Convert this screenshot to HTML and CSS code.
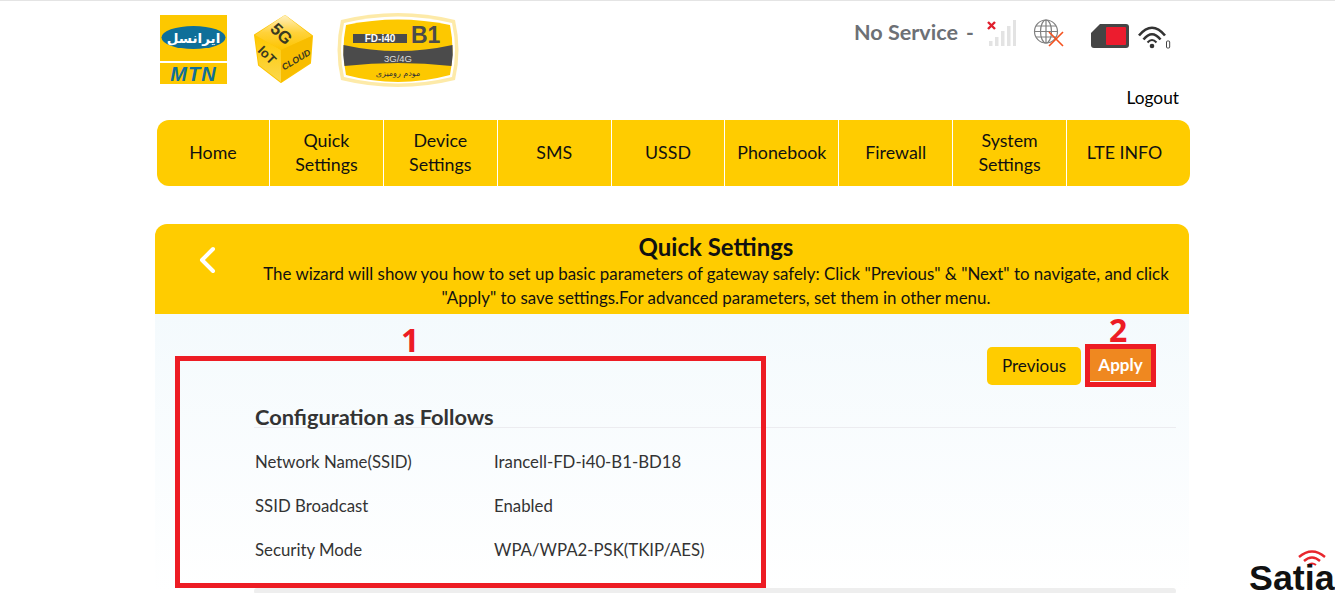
FILE: index.html
```html
<!DOCTYPE html>
<html lang="en">
<head>
<meta charset="utf-8">
<title>Quick Settings</title>
<link rel="stylesheet" href="styles.css">
</head>
<body>
<div class="page">
  <header class="header">
    <div class="logos">
      <svg class="logo-mtn" width="68" height="70" viewBox="0 0 68 70">
        <rect x="0" y="0" width="67" height="46" fill="#fdc800"/>
        <rect x="0" y="48" width="67" height="21" fill="#fdc800"/>
        <ellipse cx="33.500" cy="22.500" rx="32" ry="11.500" fill="#0f6f99"/>
        <text x="33.500" y="28" text-anchor="middle" class="t-fa" font-size="13.500" fill="#fff" font-weight="700">ایرانسل</text>
        <text x="33.500" y="66" text-anchor="middle" class="t-mtn">MTN</text>
      </svg>
      <svg class="logo-cube" width="62" height="72" viewBox="0 0 62 72">
        <defs>
          <linearGradient id="cubeTop" x1="0" y1="0" x2="0" y2="1">
            <stop offset="0" stop-color="#fff1c4"/>
            <stop offset="0.5" stop-color="#ffd23a"/>
            <stop offset="1" stop-color="#fdc400"/>
          </linearGradient>
          <linearGradient id="cubeLeft" x1="0" y1="0" x2="0" y2="1">
            <stop offset="0" stop-color="#ffc800"/>
            <stop offset="1" stop-color="#fbd84e"/>
          </linearGradient>
        </defs>
        <path d="M32 3 L59 23 L57 50 L28 69 L6 52 L2 22 Z" fill="#fdc400" stroke="#fdc400" stroke-width="2" stroke-linejoin="round"/>
        <path d="M2 22 L28 37 L28 69 L6 52 Z" fill="url(#cubeLeft)"/>
        <path d="M32 2 L59 23 L28 37 L2 22 Z" fill="url(#cubeTop)"/>
        <path d="M28 37 L28 69 L57 50 L59 23 Z" fill="#f8bd00"/>
        <text x="0" y="0" transform="translate(16.300 16.900) rotate(45)" class="t-cube-big">5G</text>
        <text x="0" y="0" transform="translate(4 38.300) rotate(45)" class="t-cube">IoT</text>
        <text x="0" y="0" transform="translate(31 57.600) rotate(-31)" class="t-cube-sm">CLOUD</text>
      </svg>
      <svg class="logo-b1" width="124" height="74" viewBox="0 0 124 74">
        <path d="M5 7 Q62 -7 119 7 Q126 37 119 67 Q62 81 5 67 Q-2 37 5 7 Z" fill="#fdeaa8"/>
        <path d="M8 10 Q62 -3 116 10 Q122 37 116 64 Q62 77 8 64 Q2 37 8 10 Z" fill="#fff"/>
        <path d="M10 12 Q62 1 114 12 Q119 37 114 62 Q62 76 10 62 Q5 37 10 12 Z" fill="#fdc800"/>
        <path d="M7.500 32 Q62 44 116.500 32 Q117.500 42 115.500 53 Q62 47 8.500 53 Q6.500 42 7.500 32 Z" fill="#4b4b4b"/>
        <rect x="17" y="21" width="54" height="9" fill="#4b4b4b"/>
        <text x="44" y="29" text-anchor="middle" class="t-fd">FD-i40</text>
        <text x="75" y="30" class="t-b1">B1</text>
        <text x="62" y="49" text-anchor="middle" class="t-3g">3G/4G</text>
        <text x="62" y="63" text-anchor="middle" class="t-fa" font-size="8" fill="#333">مودم رومیزی</text>
      </svg>
    </div>
    <div class="status">
      <div class="status-line">
        <span class="status-text">No Service</span>
        <span class="status-dash">-</span>
        <svg class="ic-signal" width="30" height="28" viewBox="0 0 30 28">
          <path d="M2 3 L9 10 M9 3 L2 10" stroke="#e01f2d" stroke-width="2.400"/>
          <g fill="#e3e3e3">
            <rect x="3" y="22" width="3.500" height="5"/>
            <rect x="9" y="18" width="3.500" height="9"/>
            <rect x="15" y="12" width="3.500" height="15"/>
            <rect x="21" y="7" width="3.500" height="20"/>
            <rect x="27" y="1" width="3" height="26"/>
          </g>
        </svg>
        <svg class="ic-globe" width="32" height="28" viewBox="0 0 32 28">
          <g fill="none" stroke="#808080" stroke-width="1.200">
            <circle cx="13" cy="12.500" r="11.500"/>
            <ellipse cx="13" cy="12.500" rx="5.500" ry="11.500"/>
            <path d="M13 1 V24 M1.500 12.500 H24.500 M3 7 H23 M3 18 H23"/>
          </g>
          <path d="M16 13 L30 27 M30 13 L16 27" stroke="#f4511e" stroke-width="1.600"/>
        </svg>
        <svg class="ic-sim" width="38" height="24" viewBox="0 0 38 24">
          <path d="M9 0 H35 Q38 0 38 3 V21 Q38 24 35 24 H3 Q0 24 0 21 V9 Z" fill="#454545"/>
          <rect x="15" y="3" width="20" height="18" rx="1" fill="#ec1c2e"/>
        </svg>
        <svg class="ic-wifi" width="34" height="24" viewBox="0 0 34 24">
          <g fill="none" stroke="#333" stroke-width="2.600">
            <path d="M2 10.500 Q15 -5 28 10.500"/>
            <path d="M6.500 14.500 Q15 4 23.500 14.500"/>
          </g>
          <path d="M10.500 17.500 Q15 12.500 19.500 17.500" fill="none" stroke="#333" stroke-width="2"/>
          <circle cx="15" cy="21" r="2.300" fill="#333"/>
          <rect x="29.500" y="16" width="3.200" height="7" rx="1" fill="none" stroke="#444" stroke-width="1"/>
        </svg>
      </div>
      <a class="logout">Logout</a>
    </div>
  </header>

  <nav class="nav">
    <a class="nav-item">Home</a>
    <a class="nav-item">Quick<br>Settings</a>
    <a class="nav-item">Device<br>Settings</a>
    <a class="nav-item">SMS</a>
    <a class="nav-item">USSD</a>
    <a class="nav-item">Phonebook</a>
    <a class="nav-item">Firewall</a>
    <a class="nav-item">System<br>Settings</a>
    <a class="nav-item">LTE INFO</a>
  </nav>

  <section class="panel">
    <div class="banner">
      <svg class="back" width="20" height="28" viewBox="0 0 20 28">
        <path d="M16 3 L5 14 L16 25" fill="none" stroke="#fff" stroke-width="4" stroke-linecap="round" stroke-linejoin="round"/>
      </svg>
      <div class="banner-text">
        <h1 class="banner-title">Quick Settings</h1>
        <p class="banner-desc">The wizard will show you how to set up basic parameters of gateway safely: Click "Previous" &amp; "Next" to navigate, and click "Apply" to save settings.For advanced parameters, set them in other menu.</p>
      </div>
    </div>
    <div class="body">
      <div class="actions">
        <button class="btn btn-prev">Previous</button>
        <button class="btn btn-apply">Apply</button>
      </div>
      <div class="config">
        <h2 class="config-title">Configuration as Follows</h2>
        <div class="rows">
          <div class="row"><span class="label">Network Name(SSID)</span><span class="value">Irancell-FD-i40-B1-BD18</span></div>
          <div class="row"><span class="label">SSID Broadcast</span><span class="value">Enabled</span></div>
          <div class="row"><span class="label">Security Mode</span><span class="value">WPA/WPA2-PSK(TKIP/AES)</span></div>
        </div>
        <div class="bottom-bar"></div>
      </div>
    </div>
  </section>
</div>

<div class="mark mark-box-1"></div>
<div class="mark mark-box-2"></div>
<span class="mark-num mark-num-1">1</span>
<span class="mark-num mark-num-2">2</span>

<div class="satia">
  <svg class="satia-wifi" width="30" height="18" viewBox="0 0 30 18">
    <g fill="none" stroke="#e8262d" stroke-width="2.400">
      <path d="M2 8 Q15 -3 28 8"/>
      <path d="M7 12 Q15 5 23 12"/>
    </g>
    <path d="M11 16 Q15 13 19 16" fill="none" stroke="#e8262d" stroke-width="2"/>
  </svg>
  <span class="satia-text">Satia</span>
</div>
</body>
</html>
```

FILE: styles.css
```css
* { box-sizing: border-box; }
html, body { margin: 0; height: 593px; overflow: hidden; }
body {
  background: #fff;
  border-top: 1px solid #e4e4e4;
  font-family: "Lato", "Open Sans", sans-serif;
  color: #000;
  position: relative;
}
.page { width: 1034px; margin-left: 155px; }

.header { height: 119px; display: flex; justify-content: space-between; }
.logos { display: flex; align-items: flex-start; padding: 11px 0 0 5px; }
.logo-mtn { margin-top: 3px; }
.logo-cube { margin: 1px 0 0 25px; }
.logo-b1 { margin: 1px 0 0 21px; overflow: visible; }
.t-fa { font-family: "DejaVu Sans", sans-serif; }
.t-mtn { font: italic 900 20px "Liberation Sans", sans-serif; fill: #0f6f99; letter-spacing: 1px; }
.t-cube-big { font: 900 17px "Liberation Sans", sans-serif; fill: #3a3a20; }
.t-cube { font: 900 13px "Liberation Sans", sans-serif; fill: #3a3a20; }
.t-cube-sm { font: italic 900 9px "Liberation Sans", sans-serif; fill: #3a3a20; }
.t-fd { font: 700 10px "Liberation Sans", sans-serif; fill: #fff; }
.t-b1 { font: 900 23px "Liberation Sans", sans-serif; fill: #4b4b4b; }
.t-3g { font: 400 9.500px "Liberation Sans", sans-serif; fill: #ddd; }

.status { width: 336px; display: flex; flex-direction: column; align-items: flex-end; padding: 17px 0 0; }
.status-line { display: flex; align-items: flex-start; width: 100%; height: 71px; }
.status-text { font-size: 21.600px; font-weight: 700; color: #6d7075; line-height: 28px; margin-left: 1px; width: 112px; flex: none; white-space: nowrap; }
.status-dash { font-size: 21px; font-weight: 700; color: #6d7075; line-height: 28px; width: 20px; flex: none; }
.ic-signal { margin-top: 1px; flex: none; }
.ic-globe { margin: 1px 0 0 17px; flex: none; }
.ic-sim { margin: 6px 0 0 26px; flex: none; }
.ic-wifi { margin: 7px 0 0 8px; flex: none; }
.logout { font-size: 17.300px; line-height: 20px; margin: -1px 10px 0 0; }

.nav {
  height: 66px;
  margin-left: 2px;
  background: #ffcc00;
  border-radius: 12px;
  display: grid;
  grid-template-columns: 113px repeat(7, 113.860px) 1fr;
  overflow: hidden;
  width: 1033px;
}
.nav-item {
  display: flex;
  align-items: center;
  justify-content: center;
  text-align: center;
  font-size: 17.800px;
  line-height: 24px;
  color: #111;
  border-right: 1px solid #fff;
  padding-bottom: 2px;
}
.nav-item:last-child { border-right: 0; padding-right: 8px; }

.panel { margin-top: 38px; }
.banner {
  height: 90px;
  background: #ffcc00;
  border-radius: 12px 12px 0 0;
  display: flex;
}
.back { margin: 22px 0 0 42px; flex: none; }
.banner-text { flex: 1; padding: 9px 7px 0 33px; width: 0; text-align: center; }
.banner-title { margin: 0; font-size: 24px; line-height: 27px; font-weight: 700; color: #111; }
.banner-desc { margin: 2px 0 0; font-size: 16.900px; line-height: 24px; color: #111; }

.body {
  height: 279px;
  background: linear-gradient(#f4fafd, #ffffff);
  overflow: hidden;
  padding: 33px 13px 0 100px;
}
.actions { display: flex; justify-content: flex-end; align-items: flex-start; gap: 9px; height: 38px; padding-right: 25px; }
.btn { border: 0; font-family: inherit; font-size: 17px; cursor: pointer; padding: 0 0 2px; }
.btn-prev { width: 94px; height: 38px; background: #ffcc00; border-radius: 5px; color: #111; }
.btn-apply { width: 61px; height: 32px; margin-top: 2px; background: #ef8820; color: #fff; font-weight: 700; }

.config { margin-top: 20px; }
.config-title {
  margin: 0 0 0 -1px;
  padding-left: 1px;
  height: 23px;
  font-size: 21.800px;
  line-height: 24px;
  font-weight: 700;
  color: #333;
  border-bottom: 1px solid #ececf0;
}
.rows { padding-top: 11px; }
.row { display: flex; height: 44px; align-items: center; font-size: 16.800px; color: #333; }
.label { width: 239px; flex: none; }
.bottom-bar { height: 6px; margin: 17px 0 0 -1px; background: #eeeeee; border-radius: 4px; }

.mark { position: absolute; border: 5px solid #ed1c24; }
.mark-box-1 { left: 175px; top: 355px; width: 591px; height: 232px; }
.mark-box-2 { left: 1085px; top: 343px; width: 71px; height: 43px; }
.mark-num { position: absolute; font: 700 32px/36px "Open Sans", sans-serif; color: #ed1c24; }
.mark-num-1 { left: 401px; top: 321px; }
.mark-num-2 { left: 1109px; top: 311px; }

.satia { position: absolute; right: 0; bottom: 0; width: 88px; height: 44px; }
.satia-wifi { position: absolute; left: 50px; top: 0; }
.satia-text { position: absolute; left: 2px; top: 15px; font: 700 35.800px/28px "Liberation Sans", sans-serif; color: #111; }
```
